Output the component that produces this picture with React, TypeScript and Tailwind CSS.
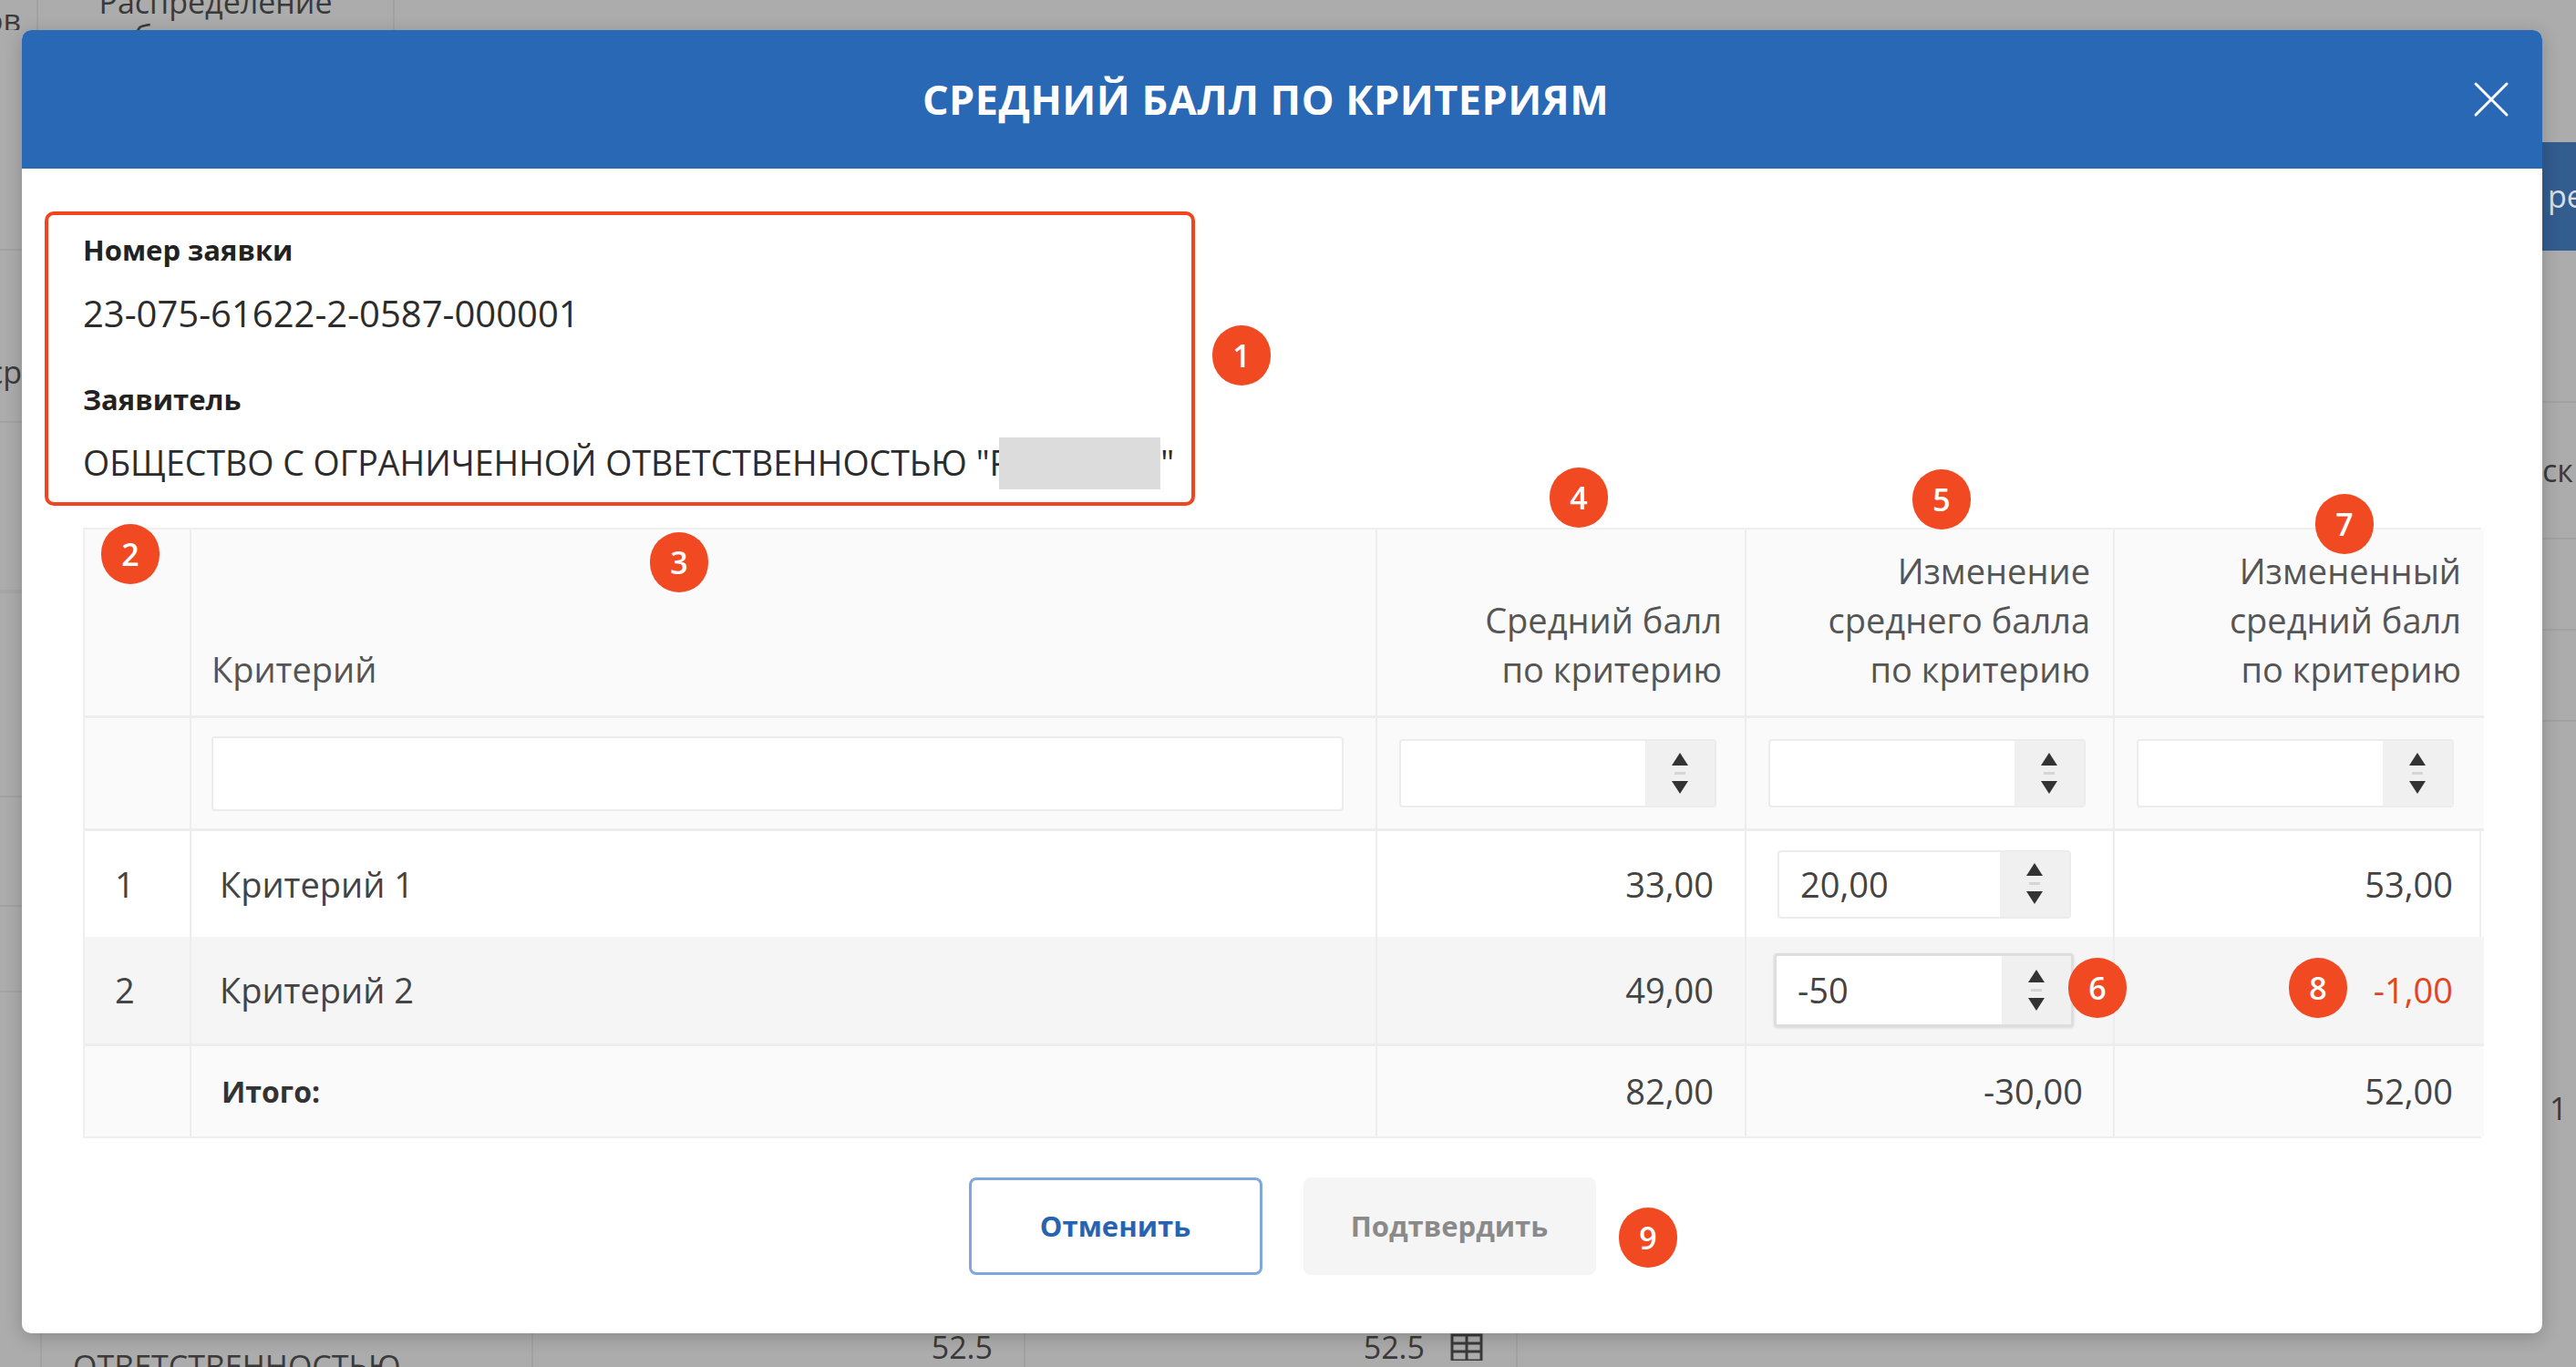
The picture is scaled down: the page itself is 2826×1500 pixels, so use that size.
import React from "react";

const Badge = ({ n, className }: { n: number; className: string }) => (
  <span
    className={`absolute flex h-[66px] w-[64px] items-center justify-center rounded-full bg-[#f14a22] text-[34px] font-semibold text-white ${className}`}>
    {n}
  </span>
);

const Spin = () => (
  <svg width="22" height="48" viewBox="0 0 22 48">
    <path d="M11 1 L20 15 L2 15 Z" fill="#333" />
    <rect x="5" y="22" width="12" height="3" fill="#d6d6d6" />
    <path d="M2 32 L20 32 L11 46 Z" fill="#333" />
  </svg>
);

const NumInput = ({ value = "", className = "" }: { value?: string; className?: string }) => (
  <div className={`flex overflow-hidden rounded-[4px] bg-white ${className}`}>
    <div className="flex flex-1 items-center pl-[23px] text-[38px] text-[#444]">{value}</div>
    <div className="flex w-[76px] items-center justify-center bg-[#f0f0f0]">
      <Spin />
    </div>
  </div>
);

const cell = "flex border-r-2 border-[#ededed]";

const App = () => {
  return (
    <div className="relative h-[1500px] w-[2826px] overflow-hidden bg-[#acacac] font-['Open_Sans',sans-serif] text-[#3a3a3a]">
      {/* page behind the overlay */}
      <div className="flex h-full flex-col">
        <div className="flex h-[33px] shrink-0">
          <div className="flex w-[42px] justify-end overflow-hidden border-r-2 border-[#a2a2a2] pr-[17px] pt-[2px] text-[34px] leading-[40px]">
            <span className="whitespace-nowrap">ллов</span>
          </div>
          <div className="-mt-[17px] w-[391px] border-r-2 border-[#a2a2a2] text-center text-[34px] leading-[38px]">
            Распределение
            <br />
            объема услуг
          </div>
        </div>
        <div className="flex flex-1">
          <div className="flex w-[24px] flex-col overflow-hidden">
            <div className="h-[242px] border-b-2 border-[#a2a2a2]" />
            <div className="flex h-[189px] items-start justify-end border-b-2 border-[#a2a2a2] pt-[113px] text-[34px] leading-[40px]">
              <span className="whitespace-nowrap">ср</span>
            </div>
            <div className="h-[187px] border-b-4 border-[#a6a6a6]" />
            <div className="h-[224px] border-b-2 border-[#a2a2a2]" />
            <div className="h-[120px] border-b-2 border-[#a2a2a2]" />
            <div className="h-[94px] border-b-2 border-[#a2a2a2]" />
          </div>
          <div className="flex-1" />
          <div className="flex w-[37px] flex-col overflow-hidden">
            <div className="h-[123px]" />
            <div className="flex h-[119px] items-center bg-[#335c8f] pl-[6px] text-[34px] text-[#d8dfe9]">
              <span className="whitespace-nowrap">ре</span>
            </div>
            <div className="h-[167px] border-b-2 border-[#a2a2a2]" />
            <div className="flex h-[150px] items-center border-b-2 border-[#a2a2a2] text-[34px]">
              <span className="whitespace-nowrap">ск</span>
            </div>
            <div className="h-[100px] border-b-2 border-[#a2a2a2]" />
            <div className="h-[100px] border-b-2 border-[#a2a2a2]" />
            <div className="flex-1 pl-[8px] pt-[404px] text-[34px] leading-[40px]">1</div>
          </div>
        </div>
        <div className="flex h-[37px] shrink-0 items-start">
          <div className="w-[46px] self-stretch border-r-2 border-[#a2a2a2]" />
          <div className="w-[539px] self-stretch overflow-hidden border-r-2 border-[#a2a2a2] pl-[34px] pt-[16px] text-[34px] leading-[40px]">
            ОТВЕТСТВЕННОСТЬЮ
          </div>
          <div className="w-[540px] self-stretch border-r-2 border-[#a2a2a2] pr-[34px] text-right text-[34px] leading-[30px]">
            52.5
          </div>
          <div className="flex w-[540px] justify-end gap-[28px] self-stretch border-r-2 border-[#a2a2a2] pr-[36px] text-[34px] leading-[30px]">
            <span>52.5</span>
            <svg width="36" height="30" viewBox="0 0 36 30" fill="none" stroke="#3a3a3a" strokeWidth="3">
              <rect x="2" y="2" width="32" height="28" />
              <path d="M2 11 H34 M2 20 H34 M18 2 V30" />
            </svg>
          </div>
        </div>
      </div>

      {/* modal */}
      <div className="absolute left-[24px] top-[33px] flex h-[1430px] w-[2765px] flex-col overflow-hidden rounded-[10px] bg-white shadow-[0_4px_20px_rgba(0,0,0,0.2)]">
        <div className="grid h-[152px] shrink-0 grid-cols-[1fr_auto_1fr] items-center bg-[#2968b5] pr-[36px]">
          <div />
          <h1 className="text-[45px] font-bold tracking-[0.5px] text-white">СРЕДНИЙ БАЛЛ ПО КРИТЕРИЯМ</h1>
          <div className="flex justify-end">
            <svg width="40" height="40" viewBox="0 0 40 40" stroke="white" strokeWidth="3" strokeLinecap="round">
              <path d="M3 3 L37 37 M37 3 L3 37" />
            </svg>
          </div>
        </div>

        <div className="flex flex-col px-[67px] pt-[62px]">
          <div className="flex flex-col text-[#222]">
            <div className="h-[54px] text-[31px] font-bold leading-[54px]">Номер заявки</div>
            <div className="mt-[16px] h-[54px] text-[40px] leading-[54px] text-[#2c2c2c]">23-075-61622-2-0587-000001</div>
            <div className="mt-[40px] h-[54px] text-[31px] font-bold leading-[54px]">Заявитель</div>
            <div className="mt-[16px] flex h-[54px] items-center whitespace-nowrap text-[37.5px] leading-[54px] text-[#2c2c2c]">
              <span>ОБЩЕСТВО С ОГРАНИЧЕННОЙ ОТВЕТСТВЕННОСТЬЮ "Р</span>
              <span className="-ml-[12px] h-[57px] w-[177px] shrink-0 bg-[#dcdcdc]" />
              <span>"</span>
            </div>
          </div>

          <div className="mt-[44px] grid grid-cols-[117px_1301px_405px_404px_405px] border-2 border-[#efefef] text-[38px] text-[#444]">
            {/* header */}
            <div className={`${cell} h-[207px] border-b-[3px] bg-[#fafafa]`} />
            <div className={`${cell} h-[207px] items-end border-b-[3px] bg-[#fafafa] pb-[24px] pl-[22px] leading-[54px] text-[#555]`}>
              Критерий
            </div>
            <div className={`${cell} h-[207px] items-end justify-end border-b-[3px] bg-[#fafafa] pb-[24px] pr-[25px] text-right leading-[54px] text-[#555]`}>
              <span>
                Средний балл
                <br />
                по критерию
              </span>
            </div>
            <div className={`${cell} h-[207px] items-end justify-end border-b-[3px] bg-[#fafafa] pb-[24px] pr-[25px] text-right leading-[54px] text-[#555]`}>
              <span>
                Изменение
                <br />
                среднего балла
                <br />
                по критерию
              </span>
            </div>
            <div className="flex h-[207px] items-end justify-end border-b-[3px] border-[#ededed] bg-[#fafafa] pb-[24px] pr-[25px] text-right leading-[54px] text-[#555]">
              <span>
                Измененный
                <br />
                средний балл
                <br />
                по критерию
              </span>
            </div>

            {/* filters */}
            <div className={`${cell} h-[124px] border-b-[3px] bg-[#fafafa]`} />
            <div className={`${cell} h-[124px] items-center border-b-[3px] bg-[#fafafa] pl-[22px] pr-[35px]`}>
              <div className="h-[82px] w-full rounded-[4px] border-2 border-[#ececec] bg-white" />
            </div>
            <div className={`${cell} h-[124px] items-center border-b-[3px] bg-[#fafafa] pl-[24px]`}>
              <NumInput className="h-[75px] w-[348px] border-2 border-[#ececec]" />
            </div>
            <div className={`${cell} h-[124px] items-center border-b-[3px] bg-[#fafafa] pl-[24px]`}>
              <NumInput className="h-[75px] w-[348px] border-2 border-[#ececec]" />
            </div>
            <div className="flex h-[124px] items-center border-b-[3px] border-[#ededed] bg-[#fafafa] pl-[24px]">
              <NumInput className="h-[75px] w-[348px] border-2 border-[#ececec]" />
            </div>

            {/* row 1 */}
            <div className={`${cell} h-[116px] items-center pl-[33px]`}>1</div>
            <div className={`${cell} h-[116px] items-center pl-[31px]`}>Критерий 1</div>
            <div className={`${cell} h-[116px] items-center justify-end pr-[34px]`}>33,00</div>
            <div className={`${cell} h-[116px] items-center pl-[34px]`}>
              <NumInput value="20,00" className="h-[75px] w-[322px] border-2 border-[#ececec]" />
            </div>
            <div className="flex h-[116px] items-center justify-end pr-[34px]">53,00</div>

            {/* row 2 */}
            <div className={`${cell} h-[120px] items-center border-b-[3px] bg-[#f5f5f5] pl-[33px]`}>2</div>
            <div className={`${cell} h-[120px] items-center border-b-[3px] bg-[#f5f5f5] pl-[31px]`}>Критерий 2</div>
            <div className={`${cell} h-[120px] items-center justify-end border-b-[3px] bg-[#f5f5f5] pr-[34px]`}>49,00</div>
            <div className={`${cell} h-[120px] items-center border-b-[3px] bg-[#f5f5f5] pl-[30px]`}>
              <NumInput
                value="-50"
                className="h-[81px] w-[329px] border-[3px] border-[#dedede] shadow-[0_1px_3px_rgba(0,0,0,0.12)]"
              />
            </div>
            <div className="flex h-[120px] items-center justify-end border-b-[3px] border-[#ededed] bg-[#f5f5f5] pr-[34px] text-[#e2451d]">
              -1,00
            </div>

            {/* total */}
            <div className={`${cell} h-[99px] bg-[#fafafa]`} />
            <div className={`${cell} h-[99px] items-center bg-[#fafafa] pl-[33px] text-[32px] font-bold text-[#333]`}>Итого:</div>
            <div className={`${cell} h-[99px] items-center justify-end bg-[#fafafa] pr-[34px]`}>82,00</div>
            <div className={`${cell} h-[99px] items-center justify-end bg-[#fafafa] pr-[33px]`}>-30,00</div>
            <div className="flex h-[99px] items-center justify-end bg-[#fafafa] pr-[34px]">52,00</div>
          </div>

          <div className="mt-[43px] flex justify-center gap-[45px]">
            <button className="h-[107px] w-[322px] rounded-[8px] border-[3px] border-[#80a7db] bg-white text-[31px] font-bold text-[#2763b0]">
              Отменить
            </button>
            <button className="h-[107px] w-[321px] rounded-[8px] bg-[#f5f5f5] text-[31px] font-bold text-[#8a8a8a]">
              Подтвердить
            </button>
          </div>
        </div>

        {/* annotations */}
        <div className="absolute left-[25px] top-[199px] h-[323px] w-[1262px] rounded-[10px] border-4 border-[#f0461f]" />
        <Badge n={1} className="left-[1306px] top-[324px]" />
        <Badge n={2} className="left-[87px] top-[542px]" />
        <Badge n={3} className="left-[689px] top-[551px]" />
        <Badge n={4} className="left-[1676px] top-[480px]" />
        <Badge n={5} className="left-[2074px] top-[482px]" />
        <Badge n={7} className="left-[2516px] top-[509px]" />
        <Badge n={6} className="left-[2245px] top-[1018px]" />
        <Badge n={8} className="left-[2487px] top-[1018px]" />
        <Badge n={9} className="left-[1752px] top-[1292px]" />
      </div>
    </div>
  );
};

export default App;
